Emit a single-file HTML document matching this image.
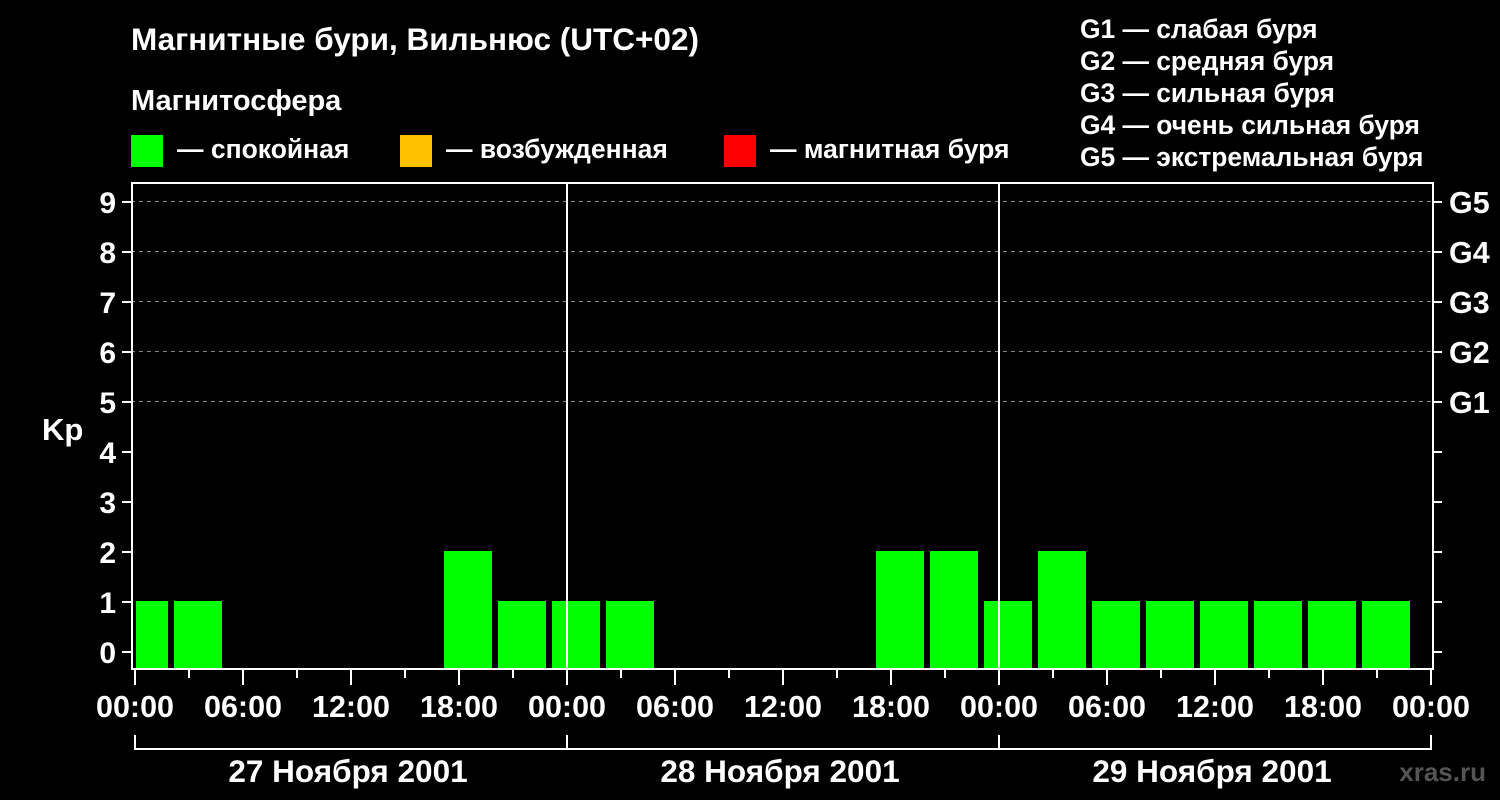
<!DOCTYPE html>
<html><head><meta charset="utf-8"><style>
html,body{margin:0;padding:0;background:#000;}
svg{display:block}
text{font-family:"Liberation Sans",Arial,sans-serif;font-weight:bold;fill:#fff}
</style></head><body>
<svg width="1500" height="800" viewBox="0 0 1500 800" xmlns="http://www.w3.org/2000/svg">
<rect width="1500" height="800" fill="#000"/>
<text x="131" y="50" font-size="31.5">Магнитные бури, Вильнюс (UTC+02)</text>
<text x="131" y="110" font-size="29">Магнитосфера</text>
<rect x="131" y="135" width="32" height="32" fill="#00ff00"/>
<text x="177" y="158" font-size="26.5">— спокойная</text>
<rect x="400" y="135" width="32" height="32" fill="#ffc000"/>
<text x="446" y="158" font-size="26.5">— возбужденная</text>
<rect x="724" y="135" width="32" height="32" fill="#ff0000"/>
<text x="770" y="158" font-size="26.5">— магнитная буря</text>
<g font-size="26.4">
<text x="1080" y="38">G1 — слабая буря</text>
<text x="1080" y="70">G2 — средняя буря</text>
<text x="1080" y="102">G3 — сильная буря</text>
<text x="1080" y="134">G4 — очень сильная буря</text>
<text x="1080" y="166">G5 — экстремальная буря</text>
</g>
<g stroke="#888" stroke-width="1" stroke-dasharray="4,4">
<line x1="131" y1="201.5" x2="1433" y2="201.5"/>
<line x1="131" y1="251.5" x2="1433" y2="251.5"/>
<line x1="131" y1="301.5" x2="1433" y2="301.5"/>
<line x1="131" y1="351.5" x2="1433" y2="351.5"/>
<line x1="131" y1="401.5" x2="1433" y2="401.5"/>
</g>
<g fill="#00ff00">
<rect x="136" y="601" width="32" height="67"/>
<rect x="174" y="601" width="48" height="67"/>
<rect x="444" y="551" width="48" height="117"/>
<rect x="498" y="601" width="48" height="67"/>
<rect x="552" y="601" width="48" height="67"/>
<rect x="606" y="601" width="48" height="67"/>
<rect x="876" y="551" width="48" height="117"/>
<rect x="930" y="551" width="48" height="117"/>
<rect x="984" y="601" width="48" height="67"/>
<rect x="1038" y="551" width="48" height="117"/>
<rect x="1092" y="601" width="48" height="67"/>
<rect x="1146" y="601" width="48" height="67"/>
<rect x="1200" y="601" width="48" height="67"/>
<rect x="1254" y="601" width="48" height="67"/>
<rect x="1308" y="601" width="48" height="67"/>
<rect x="1362" y="601" width="48" height="67"/>
</g>
<g stroke="#fff" stroke-width="2" fill="none">
<rect x="132" y="183" width="1301" height="486"/>
<line x1="567" y1="183" x2="567" y2="669"/>
<line x1="999" y1="183" x2="999" y2="669"/>
<path d="M135 735V749H1431V735M567 735V749M999 735V749"/>
</g>
<g stroke="#fff" stroke-width="2">
<path d="M122 652H131M122 602H131M122 552H131M122 502H131M122 452H131M122 402H131M122 352H131M122 302H131M122 252H131M122 202H131"/>
<path d="M1433 652H1442M1433 602H1442M1433 552H1442M1433 502H1442M1433 452H1442M1433 402H1442M1433 352H1442M1433 302H1442M1433 252H1442M1433 202H1442"/>
<path d="M135 670V685M243 670V685M351 670V685M459 670V685M567 670V685M675 670V685M783 670V685M891 670V685M999 670V685M1107 670V685M1215 670V685M1323 670V685M1431 670V685"/>
<path d="M189 670V678M297 670V678M405 670V678M513 670V678M621 670V678M729 670V678M837 670V678M945 670V678M1053 670V678M1161 670V678M1269 670V678M1377 670V678"/>
</g>
<g font-size="30" text-anchor="end">
<text x="116" y="663">0</text><text x="116" y="613">1</text><text x="116" y="563">2</text>
<text x="116" y="513">3</text><text x="116" y="463">4</text><text x="116" y="413">5</text>
<text x="116" y="363">6</text><text x="116" y="313">7</text><text x="116" y="263">8</text>
<text x="116" y="213">9</text>
</g>
<text x="42" y="440" font-size="31">Kp</text>
<g font-size="30.5">
<text x="1449" y="213">G5</text><text x="1449" y="263">G4</text><text x="1449" y="313">G3</text>
<text x="1449" y="363">G2</text><text x="1449" y="413">G1</text>
</g>
<g font-size="30.5" text-anchor="middle">
<text x="135" y="717">00:00</text><text x="243" y="717">06:00</text><text x="351" y="717">12:00</text>
<text x="459" y="717">18:00</text><text x="567" y="717">00:00</text><text x="675" y="717">06:00</text>
<text x="783" y="717">12:00</text><text x="891" y="717">18:00</text><text x="999" y="717">00:00</text>
<text x="1107" y="717">06:00</text><text x="1215" y="717">12:00</text><text x="1323" y="717">18:00</text>
<text x="1431" y="717">00:00</text>
<text x="348" y="782" font-size="31.5">27 Ноября 2001</text>
<text x="780" y="782" font-size="31.5">28 Ноября 2001</text>
<text x="1212" y="782" font-size="31.5">29 Ноября 2001</text>
</g>
<text x="1486" y="781" font-size="26" text-anchor="end" style="fill:#555">xras.ru</text>
</svg>
</body></html>
